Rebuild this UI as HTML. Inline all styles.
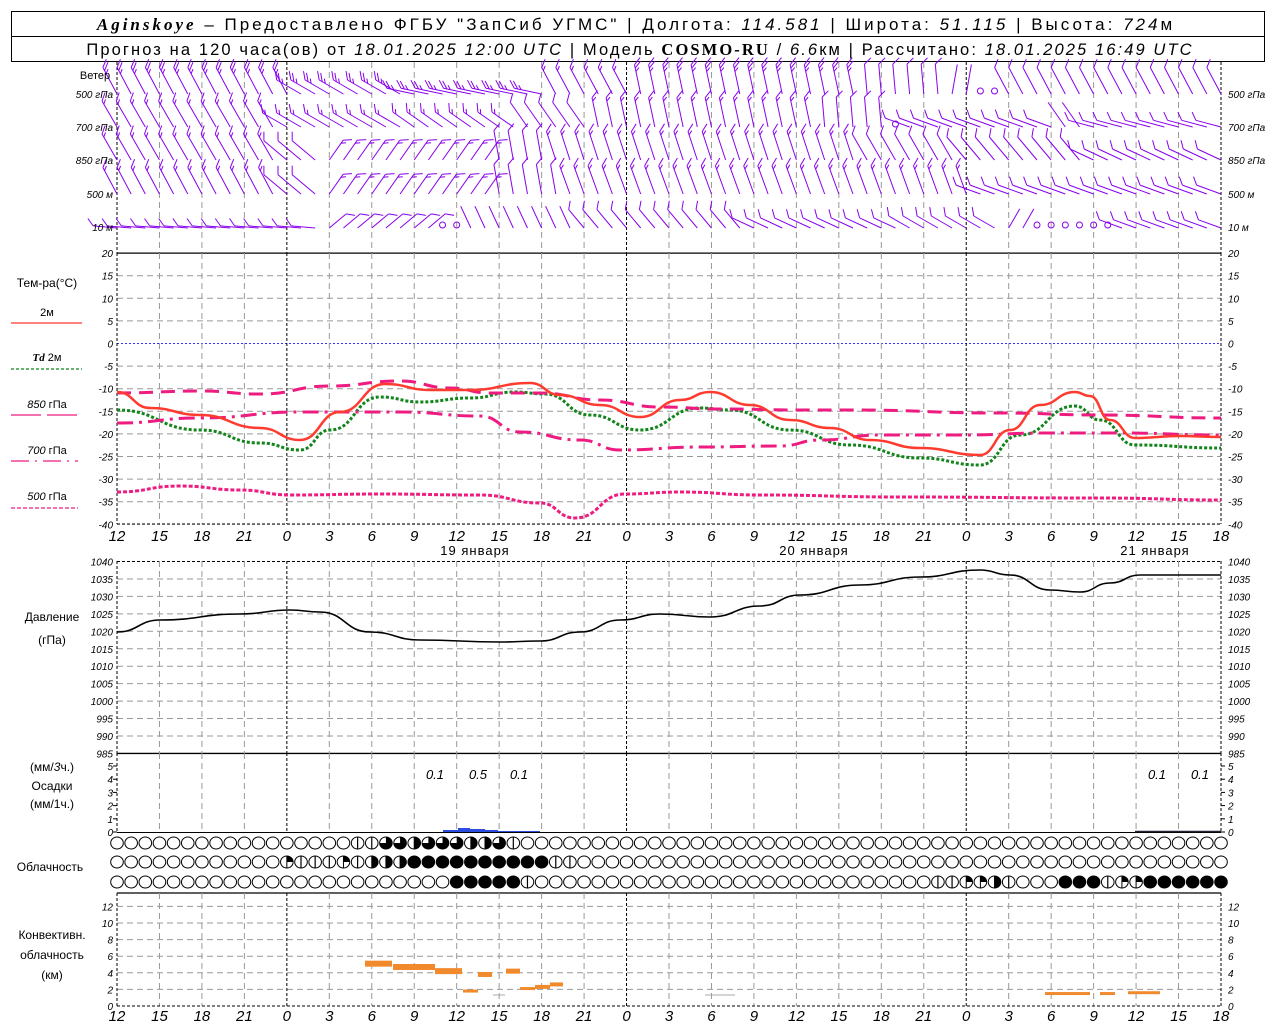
<!DOCTYPE html>
<html><head><meta charset="utf-8"><style>
html,body{margin:0;padding:0;background:#fff;width:1280px;height:1024px;overflow:hidden}
svg{display:block}
text{font-family:"Liberation Sans",sans-serif}
.it{font-style:italic}
</style></head><body>
<svg id="s" width="1280" height="1024" xmlns="http://www.w3.org/2000/svg">
<rect x="11.5" y="11.5" width="1253" height="50" fill="none" stroke="#000"/>
<line x1="11" y1="36.5" x2="1265" y2="36.5" stroke="#000"/>
<text x="636" y="30" text-anchor="middle" font-size="17" letter-spacing="3"><tspan font-family="Liberation Serif" font-style="italic" font-weight="bold">Aginskoye</tspan> – Предоставлено ФГБУ "ЗапСиб УГМС" | Долгота: <tspan class="it">114.581</tspan> | Широта: <tspan class="it">51.115</tspan> | Высота: <tspan class="it">724</tspan>м</text>
<text x="640" y="55" text-anchor="middle" font-size="16.5" letter-spacing="2.1">Прогноз на 120 часа(ов) от <tspan class="it">18.01.2025 12:00 UTC</tspan> | Модель <tspan font-family="Liberation Serif" font-weight="bold">COSMO-RU</tspan> / <tspan class="it">6.6</tspan>км | Рассчитано: <tspan class="it">18.01.2025 16:49 UTC</tspan></text>
<g id="g"></g>
</svg>
<script>
var S=document.getElementById('g'),o='';
var X0=117,X1=1221,PH=(X1-X0)/78;
function X(h){return X0+h*PH}
function L(x1,y1,x2,y2,c,w,d){o+='<line x1="'+x1+'" y1="'+y1+'" x2="'+x2+'" y2="'+y2+'" stroke="'+c+'" stroke-width="'+(w||1)+'"'+(d?' stroke-dasharray="'+d+'"':'')+'/>';}
function T(x,y,t,sz,a,ex){o+='<text x="'+x+'" y="'+y+'" font-size="'+sz+'"'+(a?' text-anchor="'+a+'"':'')+(ex||'')+'>'+t+'</text>';}
var hrs=[12,15,18,21,0,3,6,9,12,15,18,21,0,3,6,9,12,15,18,21,0,3,6,9,12,15,18];
function vgrid(y1,y2){for(var i=0;i<27;i++){var h=i*3,x=X(h);var day=(h==12||h==36||h==60||i==0||i==26);L(x,y1,x,y2,day?'#000':'#999',1,day?'3,2':'6,4');}}
vgrid(62,253);
function ty(t){return 343.5-t*4.52}
for(var t=20;t>=-40;t-=5){var y=ty(t);if(t==20)L(X0,y,X1,y,'#000',1.3);else if(t==0)L(X0,y,X1,y,'#33f',1,'2,2');else L(X0,y,X1,y,'#999',1,t==-40?'3,2':'6,4');
 T(113,y+4,t,10,'end',' class="it"');T(1228,y+4,t,10,'',' class="it"');}
vgrid(253,524);
L(X0,524,X1,524,'#000',1,'3,2');
for(var i=0;i<27;i++){T(X(i*3),541,hrs[i],15,'middle',' class="it"');T(X(i*3),1021,hrs[i],15,'middle',' class="it"');}
T(475,555,'19 января',13,'middle',' letter-spacing="1"');T(814,555,'20 января',13,'middle',' letter-spacing="1"');T(1155,555,'21 января',13,'middle',' letter-spacing="1"');
function py(p){return 561.5+(1040-p)*3.49}
for(var p=1040;p>=985;p-=5){var y=py(p);if(p==985)L(X0,y,X1,y,'#000',1.3);else L(X0,y,X1,y,p==1040?'#000':'#999',1,p==1040?'3,2':'6,4');T(113,y+4,p,10,'end',' class="it"');T(1228,y+4,p,10,'',' class="it"');}
vgrid(561,753);
for(var k=0;k<=5;k++){var y=832-k*13.2;T(113,y+4,k,10,'end',' class="it"');T(1228,y+4,k,10,'',' class="it"');L(1221,y,1225,y,'#000');L(113,y,117,y,'#000');}
vgrid(753,832);L(X0,832.5,X1,832.5,'#000',1);
for(var k=0;k<=12;k+=2){var y=1006-k*8.3;if(k>0)L(X0,y,X1,y,'#999',1,'6,4');T(113,y+4,k,10,'end',' class="it"');T(1228,y+4,k,10,'',' class="it"');}
L(X0,893,X1,893,'#000',1.3);vgrid(893,1006);L(X0,1006,X1,1006,'#000',1,'3,2');
function path(pts,c,w,d){var s='M'+pts[0][0]+','+pts[0][1];for(var i=1;i<pts.length;i++){var p0=pts[i-1],p1=pts[i],mx=(p0[0]+p1[0])/2;s+=' C'+mx+','+p0[1]+' '+mx+','+p1[1]+' '+p1[0]+','+p1[1];}o+='<path d="'+s+'" fill="none" stroke="'+c+'" stroke-width="'+w+'"'+(d?' stroke-dasharray="'+d+'"':'')+'/>';}
path([[117,410],[200,430],[260,443],[300,450],[330,430],[380,397],[420,402],[470,398],[515,392],[545,394],[590,415],[640,430],[700,408],[730,410],[790,430],[850,445],[920,458],[980,465],[1020,435],[1075,406],[1100,420],[1135,445],[1221,448]],'#11841a',3,'3,2');
path([[117,393],[200,391],[260,394],[330,386],[400,381],[450,388],[490,393],[540,393],[600,400],[660,407],[720,409],[800,410],[850,410],[1000,413],[1100,415],[1221,418]],'#ee1c80',3,'14,8');
path([[117,423],[200,418],[300,412],[400,412],[480,416],[520,432],[580,440],[620,450],[700,447],[780,446],[820,440],[880,435],[960,435],[1050,433],[1120,433],[1221,435]],'#ee1c80',3,'16,6,3,6');
path([[117,492],[180,486],[240,490],[290,495],[380,494],[480,495],[540,503],[575,518],[625,494],[680,492],[760,495],[900,497],[1100,498],[1221,500]],'#ee1c80',3,'4,2');
path([[117,392],[150,408],[200,415],[260,428],[300,440],[340,412],[385,384],[430,390],[470,390],[530,383],[560,395],[600,405],[640,417],[680,400],[710,392],[750,405],[790,420],[830,428],[870,440],[920,448],[980,455],[1010,430],[1040,405],[1075,392],[1090,396],[1110,420],[1135,438],[1180,436],[1221,437]],'#ff3b30',2.5);
path([[117,632],[160,620],[240,614],[290,610],[320,612],[370,632],[420,640],[500,642],[540,641],[580,632],[620,620],[660,614],[710,617],[760,606],[800,595],[860,585],[920,577],[980,570],[1010,575],[1050,590],[1080,592],[1110,583],[1140,575],[1221,575]],'#000',1.6);
[[443,458,2],[458,470,4],[470,485,3],[485,498,2],[498,540,1]].forEach(function(b){o+='<rect x="'+b[0]+'" y="'+(832-b[2])+'" width="'+(b[1]-b[0])+'" height="'+b[2]+'" fill="#2a4de0"/>';});
L(1135,831.5,1221,831.5,'#223',1.5);
T(435,779,'0.1',13,'middle',' class="it"');T(478,779,'0.5',13,'middle',' class="it"');T(519,779,'0.1',13,'middle',' class="it"');T(1157,779,'0.1',13,'middle',' class="it"');T(1200,779,'0.1',13,'middle',' class="it"');
[[365,392,5.1,6],[393,435,4.7,6],[435,462,4.2,6],[463,478,1.8,3],[478,492,3.8,5],[506,520,4.2,5],[520,535,2.1,3],[535,550,2.3,4],[550,563,2.6,4],[1045,1090,1.5,3],[1100,1115,1.5,3],[1128,1160,1.6,3]].forEach(function(b){o+='<rect x="'+b[0]+'" y="'+(1006-b[2]*8.3-b[3]/2)+'" width="'+(b[1]-b[0])+'" height="'+b[3]+'" fill="#f08a2c"/>';});
L(493,995,505,995,'#aaa');L(705,995,735,995,'#aaa');
function cl(x,y,f){var r=6.3,ry=6;o+='<ellipse cx="'+x+'" cy="'+y+'" rx="'+r+'" ry="'+ry+'" fill="'+(f==4?'#000':'#fff')+'" stroke="#000" stroke-width="1"/>';
 if(f==1)L(x,y-ry,x,y+ry,'#000',1.2);
 if(f==2)o+='<path d="M'+x+','+(y-ry)+' A'+r+','+ry+' 0 0 1 '+x+','+(y+ry)+' Z" fill="#000"/>'+'<line x1="'+x+'" y1="'+(y-ry)+'" x2="'+x+'" y2="'+(y+ry)+'" stroke="#000"/>';
 if(f==3)o+='<path d="M'+x+','+y+' L'+x+','+(y-ry)+' A'+r+','+ry+' 0 1 1 '+(x-r)+','+y+' Z" fill="#000"/>';
 if(f==5)o+='<path d="M'+x+','+y+' L'+x+','+(y-ry)+' A'+r+','+ry+' 0 0 1 '+(x+r)+','+y+' Z" fill="#000"/>'+'<line x1="'+x+'" y1="'+(y-ry)+'" x2="'+x+'" y2="'+(y+ry)+'" stroke="#000"/>';}
var r1={17:1,18:1,19:3,20:3,21:2,22:3,23:3,24:3,25:2,26:2,27:3,28:1};
var r2={12:5,13:1,14:1,15:1,16:5,17:1,18:2,19:2,20:2,21:4,22:4,23:4,24:4,25:4,26:4,27:4,28:4,29:4,30:4,31:1,32:1};
var r3={24:4,25:4,26:4,27:4,28:4,29:1,58:1,59:1,60:5,61:5,62:2,63:1,67:4,68:4,69:4,70:1,71:5,72:5,73:4,74:4,75:4,76:4,77:4,78:4};
for(var i=0;i<=78;i++){var x=X(i);cl(x,843,r1[i]||0);cl(x,862,r2[i]||0);cl(x,882,r3[i]||0);}
var P='#8800ee';
function barb(x,y,a,n,len){len=len||30;var r=a*Math.PI/180,dx=Math.cos(r),dy=Math.sin(r);var tx=x+dx*len,ty2=y+dy*len;L(x,y,tx.toFixed(1),ty2.toFixed(1),P,1);
 var fr=(a+50)*Math.PI/180;for(var k=0;k<n;k++){var bx=tx-dx*k*3.5,by=ty2-dy*k*3.5;var fl=(k==n-1&&n>1)?5:9;L(bx.toFixed(1),by.toFixed(1),(bx+Math.cos(fr)*fl).toFixed(1),(by+Math.sin(fr)*fl).toFixed(1),P,1);}}
function calm(x,y){o+='<circle cx="'+x+'" cy="'+y+'" r="3" fill="none" stroke="'+P+'"/>';}
function lv(h,y,spec){for(var s=0;s<spec.length;s++){var z=spec[s];if(h>=z[0]&&h<=z[1]){if(z[2]=='c')calm(X(h),y-3);else barb(X(h),y,z[2],z[3],z[4]);return;}}}
for(var h=0;h<=78;h++){
 lv(h,94,[[0,12,-118,3],[13,20,-150,3,28],[21,30,-168,3,28],[31,36,-118,2],[37,52,-102,3],[53,58,-95,1],[59,60,-80,0],[61,62,'c'],[63,78,-118,1]]);
 lv(h,127,[[0,11,-120,2],[12,20,-150,2,28],[21,28,-145,2,26],[29,33,-125,1],[34,49,-102,2],[50,54,-95,1],[55,55,'c'],[56,66,-160,1,26],[67,68,-125,0],[69,78,-165,1,26]]);
 lv(h,160,[[0,11,-120,2],[12,14,-140,1],[15,26,-55,2,24],[27,30,-100,1],[31,52,-108,2],[53,59,-120,1],[60,68,-130,1],[69,78,-155,1,26]]);
 lv(h,194,[[0,11,-118,2],[12,14,-140,1],[15,26,-55,2,24],[27,31,-100,1],[32,60,-110,2],[61,70,-160,1,26],[71,78,-160,1,26]]);
 lv(h,228,[[0,14,-175,1,24],[15,22,-40,1,22],[23,24,'c'],[25,32,-115,0,24],[33,44,-130,1,24],[45,55,-155,1,24],[56,62,-150,1,24],[63,64,-60,0,22],[65,66,'c'],[67,70,'c'],[71,78,-160,1,24]]);}
T(95,79,'Ветер',11,'middle');
[['500 гПа',98],['700 гПа',131],['850 гПа',164],['500 м',198],['10  м',231]].forEach(function(a){T(113,a[1],a[0],10,'end',' class="it"');T(1228,a[1],a[0],10,'',' class="it"');});
T(47,287,'Тем-ра(°С)',12,'middle');
T(47,316,'2м',11,'middle');L(11,323,82,323,'#ff3b30',1.2);
T(47,361,'<tspan font-style="italic" font-weight="bold" font-family="Liberation Serif">Td</tspan>  2м',11,'middle');L(11,369,82,369,'#11841a',1.2,'3,2');
T(47,408,'<tspan class="it">850</tspan> гПа',11,'middle');L(11,415,78,415,'#ee1c80',1.2,'30,6');
T(47,454,'<tspan class="it">700</tspan> гПа',11,'middle');L(11,461,78,461,'#ee1c80',1.2,'18,6,2,6');
T(47,500,'<tspan class="it">500</tspan> гПа',11,'middle');L(11,508,78,508,'#ee1c80',1.2,'4,2');
T(52,621,'Давление',12,'middle');T(52,644,'(гПа)',12,'middle');
T(52,771,'(мм/<tspan class="it">3</tspan>ч.)',12,'middle');T(52,790,'Осадки',12,'middle');T(52,808,'(мм/1ч.)',12,'middle');
T(50,871,'Облачность',12,'middle');
T(52,939,'Конвективн.',12,'middle');T(52,959,'облачность',12,'middle');T(52,979,'(км)',12,'middle');
S.innerHTML=o;
</script>
</body></html>
